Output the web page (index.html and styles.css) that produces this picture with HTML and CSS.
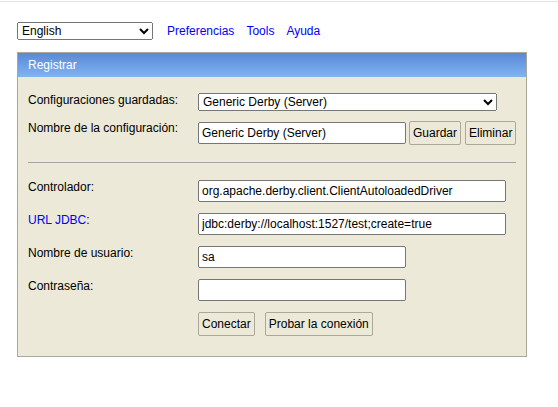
FILE: index.html
```html
<!DOCTYPE html>
<html lang="es">
<head>
<meta charset="utf-8">
<title>H2 Console</title>
<link rel="stylesheet" href="styles.css">
</head>
<body>
<div class="frame">
  <div class="toolbar">
    <select class="lang">
      <option>English</option>
    </select>
    <a href="#" class="toplink">Preferencias</a>
    <a href="#" class="toplink">Tools</a>
    <a href="#" class="toplink">Ayuda</a>
  </div>

  <div class="login">
    <div class="login-head">Registrar</div>
    <div class="login-body">
      <div class="grid grid-top">
        <div class="label">Configuraciones guardadas:</div>
        <div class="field">
          <select class="setting">
            <option>Generic Derby (Server)</option>
          </select>
        </div>

        <div class="label">Nombre de la configuración:</div>
        <div class="field field-row">
          <input class="text short" type="text" value="Generic Derby (Server)">
          <button class="btn btn-save">Guardar</button>
          <button class="btn btn-remove">Eliminar</button>
        </div>
      </div>

      <div class="sep"></div>

      <div class="grid grid-bottom">
        <div class="label">Controlador:</div>
        <div class="field"><input class="text long" type="text" value="org.apache.derby.client.ClientAutoloadedDriver"></div>

        <div class="label"><a href="#" class="help">URL JDBC</a>:</div>
        <div class="field"><input class="text long" type="text" value="jdbc:derby://localhost:1527/test;create=true"></div>

        <div class="label">Nombre de usuario:</div>
        <div class="field"><input class="text short" type="text" value="sa"></div>

        <div class="label">Contraseña:</div>
        <div class="field"><input class="text short" type="password" value=""></div>

        <div class="label"></div>
        <div class="field field-row">
          <button class="btn btn-connect">Conectar</button>
          <button class="btn btn-test">Probar la conexión</button>
        </div>
      </div>
    </div>
  </div>
</div>
</body>
</html>
```

FILE: styles.css
```css
html, body {
  margin: 0;
  padding: 0;
  background: #ffffff;
}

body {
  font-family: "Liberation Sans", Arial, sans-serif;
  font-size: 12px;
  color: #000000;
}

.frame {
  margin-top: 1px;
  border-top: 1px solid #e3e3e3;
  padding: 20px 17px 0 17px;
}

.toolbar {
  display: flex;
  align-items: center;
  height: 18px;
}

select, input, button {
  font-family: "Liberation Sans", Arial, sans-serif;
  font-size: 12px;
  color: #000000;
  margin: 0;
}

.lang {
  width: 136px;
  height: 18px;
  margin-right: 14px;
}

.toplink {
  color: #0000ff;
  text-decoration: none;
  margin-right: 12px;
  line-height: 14px;
}

.login {
  margin-top: 12px;
  width: 510px;
  box-sizing: border-box;
  border: 1px solid #aca899;
  background: #ece9d8;
}

.login-head {
  height: 24px;
  line-height: 24px;
  padding-left: 10px;
  color: #ffffff;
  background: linear-gradient(to bottom, #5a89d5, #7fb4f1);
}

.login-body {
  padding: 16px 10px 20px 10px;
}

.grid {
  display: grid;
  grid-template-columns: 170px 1fr;
  align-items: start;
}

.grid-top {
  row-gap: 10px;
}

.grid-bottom {
  row-gap: 11px;
}

.label {
  line-height: 14px;
}

.help {
  color: #0000ff;
  text-decoration: none;
}

.field {
  display: flex;
  align-items: center;
}

.setting {
  width: 299px;
  height: 18px;
}

.text {
  box-sizing: border-box;
  height: 22px;
  border: 1px solid #767676;
  border-radius: 2px;
  padding: 1px 3px;
  background: #ffffff;
}

.short {
  width: 208px;
}

.long {
  width: 308px;
}

.btn {
  box-sizing: border-box;
  height: 24px;
  padding: 0 3px;
  border: 1px solid #aca899;
  border-radius: 2px;
  background: #ece9d8;
  line-height: 20px;
}

.btn-save {
  margin-left: 3px;
}

.btn-remove {
  margin-left: 4px;
}

.btn-test {
  margin-left: 10px;
}

.sep {
  height: 1px;
  background: #a5a5a5;
  margin: 17px 0 17px 0;
}
```
